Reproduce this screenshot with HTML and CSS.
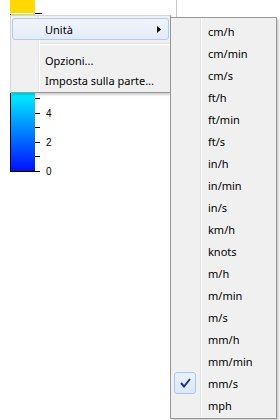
FILE: index.html
```html
<!DOCTYPE html>
<html lang="it">
<head>
    <meta charset="UTF-8">
    <title>Unità</title>
    <link rel="stylesheet" href="styles.css">
</head>
<body>
    <div class="chart">
        <svg class="legend" width="280" height="180" viewBox="0 0 280 180">
            <defs>
                <linearGradient id="bar" x1="0" y1="0" x2="0" y2="1">
                    <stop offset="0" stop-color="#f0e000"/>
                    <stop offset="0.35" stop-color="#40f080"/>
                    <stop offset="0.5" stop-color="#00f4ff"/>
                    <stop offset="1" stop-color="#0010ff"/>
                </linearGradient>
            </defs>
            <rect x="10" y="0" width="25" height="13" fill="#ffd800"/>
            <rect x="10" y="14" width="25" height="157" fill="url(#bar)"/>
            <line x1="10.5" y1="14" x2="10.5" y2="172" stroke="#000"/>
            <line x1="10" y1="171.5" x2="35" y2="171.5" stroke="#000"/>
            <g stroke="#000">
                <line x1="35" y1="13.5" x2="42" y2="13.5"/>
                <line x1="35" y1="98.5" x2="40" y2="98.5"/>
                <line x1="35" y1="113.5" x2="40" y2="113.5"/>
                <line x1="35" y1="127.5" x2="40" y2="127.5"/>
                <line x1="35" y1="142.5" x2="40" y2="142.5"/>
                <line x1="35" y1="156.5" x2="40" y2="156.5"/>
                <line x1="35" y1="171.5" x2="40" y2="171.5"/>
            </g>
            <line x1="176.5" y1="0" x2="176.5" y2="17" stroke="#c8c8c8"/>
            <g class="tick-label">
                <text x="46" y="117">4</text>
                <text x="46" y="146">2</text>
                <text x="46" y="175">0</text>
            </g>
        </svg>
    </div>

    <div class="menu main-menu">
        <div class="item active">
            <span class="label">Unità</span>
            <svg class="arrow" width="4" height="7" viewBox="0 0 4 7"><path d="M0 0 L4 3.5 L0 7 Z" fill="#000"/></svg>
        </div>
        <div class="sep"></div>
        <div class="item"><span class="label">Opzioni...</span></div>
        <div class="item"><span class="label">Imposta sulla parte...</span></div>
    </div>

    <div class="menu sub-menu">
        <div class="item"><span class="label">cm/h</span></div>
        <div class="item"><span class="label">cm/min</span></div>
        <div class="item"><span class="label">cm/s</span></div>
        <div class="item"><span class="label">ft/h</span></div>
        <div class="item"><span class="label">ft/min</span></div>
        <div class="item"><span class="label">ft/s</span></div>
        <div class="item"><span class="label">in/h</span></div>
        <div class="item"><span class="label">in/min</span></div>
        <div class="item"><span class="label">in/s</span></div>
        <div class="item"><span class="label">km/h</span></div>
        <div class="item"><span class="label">knots</span></div>
        <div class="item"><span class="label">m/h</span></div>
        <div class="item"><span class="label">m/min</span></div>
        <div class="item"><span class="label">m/s</span></div>
        <div class="item"><span class="label">mm/h</span></div>
        <div class="item"><span class="label">mm/min</span></div>
        <div class="item checked">
            <span class="check">
                <svg width="11" height="10" viewBox="0 0 11 10"><path d="M1 5 L4 8.5 L10 1" fill="none" stroke="#1c2f94" stroke-width="2"/></svg>
            </span>
            <span class="label">mm/s</span>
        </div>
        <div class="item"><span class="label">mph</span></div>
    </div>
</body>
</html>
```

FILE: styles.css
```css
* {
    box-sizing: border-box;
    margin: 0;
    padding: 0;
}

body {
    width: 280px;
    height: 420px;
    overflow: hidden;
    background: #ffffff;
    font-family: "Noto Sans", "Open Sans", sans-serif;
    font-size: 11px;
    color: #000000;
    position: relative;
}

.legend {
    display: block;
}

.tick-label {
    font-family: "Liberation Sans", Arial, sans-serif;
    font-size: 10px;
    fill: #000;
}

/* popup menus lie over the chart */
.menu {
    position: absolute;
    background: #f0f0f0;
    border: 1px solid #979797;
    box-shadow: 2px 2px 2px rgba(0, 0, 0, 0.18);
}

.main-menu {
    left: 10px;
    top: 15px;
    width: 161px;
    height: 78px;
    padding: 2px 0 0 1px;
    border-color: #d6d6d6 #979797 #979797 #d6d6d6;
    background: linear-gradient(to right, #f0f0f0 27px, #e2e3e3 27px, #e2e3e3 28px, #ffffff 28px, #ffffff 29px, #f0f0f0 29px);
}

.sub-menu {
    left: 170px;
    top: 17px;
    width: 107px;
    height: 402px;
    padding: 2px 0 0 2px;
    background: linear-gradient(to right, #f0f0f0 29px, #e2e3e3 29px, #e2e3e3 30px, #ffffff 30px, #ffffff 31px, #f0f0f0 31px);
}

.item {
    display: flex;
    align-items: center;
    position: relative;
}

.main-menu .item {
    height: 20px;
}

.main-menu .item .label {
    padding-left: 33px;
}

.main-menu .item.active {
    height: 22px;
    margin-right: 1px;
    justify-content: space-between;
    border: 1px solid #aecdf2;
    border-radius: 3px;
    background: linear-gradient(#f1f5fb, #e2ebf7);
}

.main-menu .item.active .label {
    padding-left: 32px;
}

.arrow {
    margin-right: 7px;
}

.sep {
    height: 10px;
    margin-left: 28px;
    background: linear-gradient(#f0f0f0 3px, #e0e0e0 3px, #e0e0e0 4px, #ffffff 4px, #ffffff 5px, #f0f0f0 5px);
}

.sub-menu .item {
    height: 22px;
}

.sub-menu .item .label {
    padding-left: 35px;
}

.check {
    position: absolute;
    left: 1px;
    top: 0;
    width: 22px;
    height: 22px;
    border: 1px solid #a9c7ee;
    border-radius: 3px;
    background: linear-gradient(#eaf1fb, #dce8f7);
    display: flex;
    align-items: center;
    justify-content: center;
}
```
